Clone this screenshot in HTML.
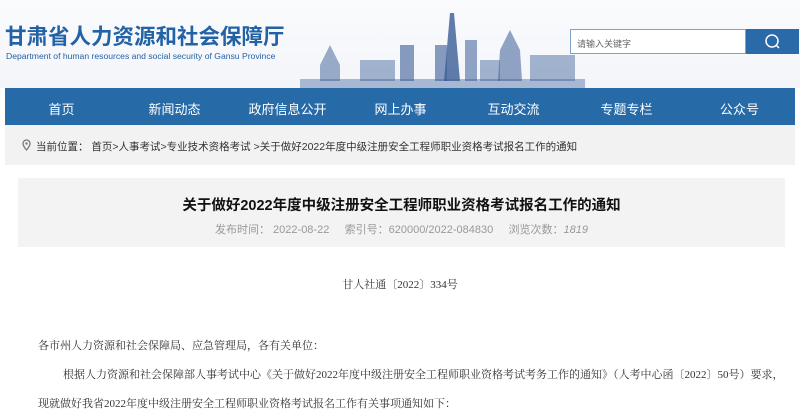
<!DOCTYPE html>
<html><head><meta charset="utf-8"><style>
*{margin:0;padding:0;box-sizing:border-box}
body{width:800px;height:417px;overflow:hidden;background:#fff;font-family:"Liberation Sans","Noto Sans CJK SC",sans-serif;position:relative}
.hdr{position:absolute;left:0;top:0;width:800px;height:88px;background:linear-gradient(#fafbfd,#f3f5fa)}
.logo{position:absolute;left:5px;top:24px;font-size:21.5px;font-weight:bold;color:#2462a6;white-space:nowrap;line-height:26px}
.en{position:absolute;left:6px;top:51px;font-size:8.6px;color:#2462a6;white-space:nowrap}
.search{position:absolute;left:570px;top:29px;width:176px;height:25px;border:1px solid #7fa3c8;background:#fff;font-size:9px;color:#666;padding:7px 0 0 6px}
.btn{position:absolute;left:746px;top:29px;width:53px;height:25px;background:#2a6aa8}
.nav{position:absolute;left:5px;top:88px;width:790px;height:37px;background:#266aa8}
.nav span{position:absolute;top:11px;width:113px;text-align:center;color:#fff;font-size:13px}
.bc{position:absolute;left:5px;top:125px;width:790px;height:40px;background:#f2f2f2;font-size:10.5px;color:#333;padding:14px 0 0 31px;white-space:nowrap}
.box{position:absolute;left:18px;top:178px;width:767px;height:69px;background:#f3f3f3}
.title{position:absolute;left:0;top:16px;width:100%;text-align:center;font-size:14.5px;font-weight:bold;color:#111}
.meta{position:absolute;left:0;top:43px;width:100%;text-align:center;font-size:11px;color:#999}
.s{font-family:"Liberation Serif","Noto Serif CJK SC",serif;font-size:11px;color:#333;position:absolute;white-space:nowrap}
</style></head><body>
<div class="hdr">
<svg style="position:absolute;left:300px;top:5px" width="300" height="83" viewBox="0 0 300 83">
<g fill="#3a5d96">
<rect x="0" y="74" width="285" height="9" opacity="0.4"/>
<polygon points="150,8 154,8 160,76 144,76" opacity="0.8"/>
<rect x="135" y="40" width="12" height="36" opacity="0.6"/>
<rect x="100" y="40" width="14" height="36" opacity="0.6"/>
<rect x="165" y="35" width="12" height="41" opacity="0.55"/>
<polygon points="210,25 220,45 222,76 198,76 200,45" opacity="0.55"/>
<polygon points="20,60 30,40 40,60 40,76 20,76" opacity="0.5"/>
<rect x="60" y="55" width="35" height="21" opacity="0.45"/>
<rect x="230" y="50" width="45" height="26" opacity="0.45"/>
<rect x="180" y="55" width="20" height="21" opacity="0.45"/>
</g></svg>
<div class="logo">甘肃省人力资源和社会保障厅</div>
<div class="en">Department of human resources and social security of Gansu Province</div>
<div class="search">请输入关键字</div>
<div class="btn"><svg width="53" height="25"><circle cx="26" cy="12" r="6" fill="none" stroke="#fff" stroke-width="1.5"/><line x1="30" y1="16" x2="33" y2="19" stroke="#fff" stroke-width="1.5"/></svg></div>
</div>
<div class="nav">
<span style="left:0">首页</span><span style="left:113px">新闻动态</span><span style="left:226px">政府信息公开</span><span style="left:339px">网上办事</span><span style="left:452px">互动交流</span><span style="left:565px">专题专栏</span><span style="left:678px">公众号</span>
</div>
<div class="bc"><svg style="position:absolute;left:17px;top:14px" width="9" height="12"><path d="M4.5 1a3.5 3.5 0 0 1 3.5 3.5c0 2.5-3.5 6.5-3.5 6.5S1 7 1 4.5A3.5 3.5 0 0 1 4.5 1z" fill="none" stroke="#777" stroke-width="1.3"/><circle cx="4.5" cy="4.5" r="1.2" fill="#777"/></svg>当前位置：&nbsp;首页&gt;人事考试&gt;专业技术资格考试 &gt;关于做好2022年度中级注册安全工程师职业资格考试报名工作的通知</div>
<div class="box">
<div class="title">关于做好2022年度中级注册安全工程师职业资格考试报名工作的通知</div>
<div class="meta">发布时间：&nbsp;2022-08-22&nbsp;&nbsp;&nbsp;&nbsp;&nbsp;索引号：620000/2022-084830&nbsp;&nbsp;&nbsp;&nbsp;&nbsp;浏览次数：<i>1819</i></div>
</div>
<div class="s" style="left:0;width:800px;text-align:center;top:276px">甘人社通〔2022〕334号</div>
<div class="s" style="left:38px;top:337px">各市州人力资源和社会保障局、应急管理局，各有关单位：</div>
<div class="s" style="left:63px;top:366px">根据人力资源和社会保障部人事考试中心《关于做好2022年度中级注册安全工程师职业资格考试考务工作的通知》（人考中心函〔2022〕50号）要求，</div>
<div class="s" style="left:38px;top:395px">现就做好我省2022年度中级注册安全工程师职业资格考试报名工作有关事项通知如下：</div>
</body></html>
